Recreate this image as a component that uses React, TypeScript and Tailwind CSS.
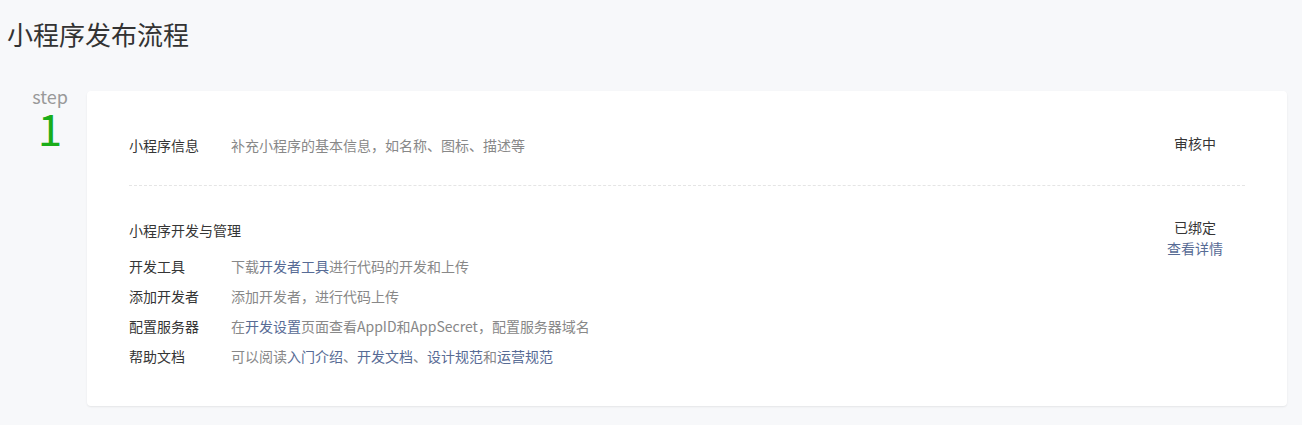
const font = { fontFamily: '"Noto Sans CJK SC", "Noto Sans", sans-serif' };

function Row({ label, children }: { label: string; children: React.ReactNode }) {
  return (
    <div className="flex h-[30px] items-center">
      <div className="w-[102px] shrink-0 text-[#353535]">{label}</div>
      <div className="text-[#888888]">{children}</div>
    </div>
  );
}

function Link({ children }: { children: React.ReactNode }) {
  return <a className="text-[#576b95] cursor-pointer">{children}</a>;
}

export default function App() {
  return (
    <div className="min-h-screen bg-[#f7f8fa] pb-[19px]" style={font}>
      <h1 className="pl-[7px] pt-[16px] text-[26px] leading-[36px] text-[#333333]">
        小程序发布流程
      </h1>
      <div className="mt-[39px] flex">
        <div className="w-[87px] shrink-0 pl-[13px] text-center">
          <div className="-mt-[4px] text-[18px] leading-[19px] text-[#999999]">step</div>
          <div className="mt-[3px] text-[44px] leading-[36px] text-[#1aad19]">1</div>
        </div>
        <div className="mr-[15px] flex-1 rounded-[4px] bg-white px-[42px] pt-[39px] pb-[35px] text-[14px] shadow-[0_1px_2px_rgba(0,0,0,0.08)]">
          <div className="flex h-[30px] items-center justify-between">
            <div className="flex">
              <div className="w-[102px] shrink-0 text-[#353535]">小程序信息</div>
              <div className="text-[#888888]">补充小程序的基本信息，如名称、图标、描述等</div>
            </div>
            <div className="w-[100px] -mt-[3px] text-center text-[#353535]">审核中</div>
          </div>
          <div className="mt-[25px] border-t border-dashed border-[#e5e5e5]" />
          <div className="mt-[29px] flex justify-between">
            <div className="flex flex-col">
              <div className="flex h-[30px] items-center text-[#353535]">小程序开发与管理</div>
              <div className="mt-[6px]">
                <Row label="开发工具">
                  下载<Link>开发者工具</Link>进行代码的开发和上传
                </Row>
                <Row label="添加开发者">添加开发者，进行代码上传</Row>
                <Row label="配置服务器">
                  在<Link>开发设置</Link>页面查看AppID和AppSecret，配置服务器域名
                </Row>
                <Row label="帮助文档">
                  可以阅读<Link>入门介绍</Link>、<Link>开发文档</Link>、<Link>设计规范</Link>和<Link>运营规范</Link>
                </Row>
              </div>
            </div>
            <div className="mt-[2px] flex w-[100px] flex-col items-center leading-[21px]">
              <div className="text-[#353535]">已绑定</div>
              <Link>查看详情</Link>
            </div>
          </div>
        </div>
      </div>
    </div>
  );
}
